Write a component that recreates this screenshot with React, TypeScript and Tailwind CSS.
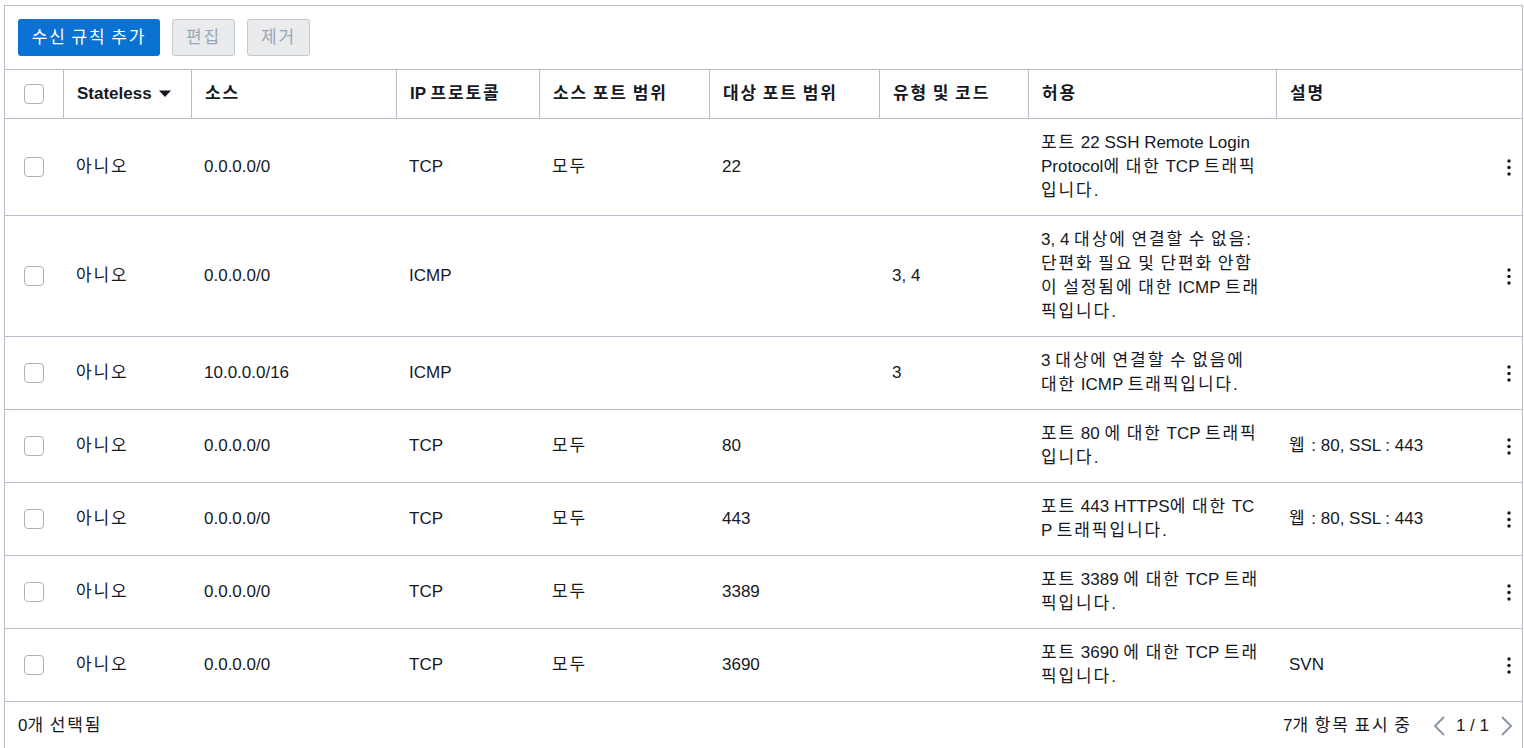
import React from "react";

const FONT = '"Liberation Sans", Arial, "Noto Sans CJK KR", sans-serif';

function K({ t }: { t: string }) {
  const parts = t.split(/([\u3131-\u318E\uAC00-\uD7A3]+)/);
  return (
    <span>
      {parts.map((p, i) =>
        /[\u3131-\u318E\uAC00-\uD7A3]/.test(p) ? (
          <span key={i} className="tracking-[1.9px]">
            {p}
          </span>
        ) : (
          <React.Fragment key={i}>{p}</React.Fragment>
        )
      )}
    </span>
  );
}

type Row = {
  source: string;
  proto: string;
  srcPort: string;
  dstPort: string;
  type: string;
  allow: string[];
  desc: string;
};

const rows: Row[] = [
  { source: "0.0.0.0/0", proto: "TCP", srcPort: "모두", dstPort: "22", type: "", allow: ["포트 22 SSH Remote Login", "Protocol에 대한 TCP 트래픽", "입니다."], desc: "" },
  { source: "0.0.0.0/0", proto: "ICMP", srcPort: "", dstPort: "", type: "3, 4", allow: ["3, 4 대상에 연결할 수 없음:", "단편화 필요 및 단편화 안함", "이 설정됨에 대한 ICMP 트래", "픽입니다."], desc: "" },
  { source: "10.0.0.0/16", proto: "ICMP", srcPort: "", dstPort: "", type: "3", allow: ["3 대상에 연결할 수 없음에", "대한 ICMP 트래픽입니다."], desc: "" },
  { source: "0.0.0.0/0", proto: "TCP", srcPort: "모두", dstPort: "80", type: "", allow: ["포트 80 에 대한 TCP 트래픽", "입니다."], desc: "웹 : 80, SSL : 443" },
  { source: "0.0.0.0/0", proto: "TCP", srcPort: "모두", dstPort: "443", type: "", allow: ["포트 443 HTTPS에 대한 TC", "P 트래픽입니다."], desc: "웹 : 80, SSL : 443" },
  { source: "0.0.0.0/0", proto: "TCP", srcPort: "모두", dstPort: "3389", type: "", allow: ["포트 3389 에 대한 TCP 트래", "픽입니다."], desc: "" },
  { source: "0.0.0.0/0", proto: "TCP", srcPort: "모두", dstPort: "3690", type: "", allow: ["포트 3690 에 대한 TCP 트래", "픽입니다."], desc: "SVN" },
];

const COLS = "grid grid-cols-[58px_128px_205px_143px_170px_170px_149px_248px_1fr]";

function Checkbox() {
  return <div className="w-[20px] h-[20px] rounded-[4px] border border-[#aab2bd] bg-white" />;
}

function Kebab() {
  return (
    <svg width="4" height="17" viewBox="0 0 4 17" className="block">
      <circle cx="2" cy="2" r="1.7" fill="#16191f" />
      <circle cx="2" cy="8.5" r="1.7" fill="#16191f" />
      <circle cx="2" cy="15" r="1.7" fill="#16191f" />
    </svg>
  );
}

function HeadCell({ children }: { children?: React.ReactNode }) {
  return (
    <div className="flex items-center pl-[13px] font-bold border-l border-[#b6bec9] whitespace-nowrap">
      {children}
    </div>
  );
}

export default function App() {
  return (
    <div className="w-[1524px] h-[748px] overflow-hidden bg-white pl-[4px] pt-[5px] pr-[1px]" style={{ fontFamily: FONT }}>
      <div className="border border-[#b6bec9] text-[#16191f] text-[17px] leading-[24px]">
        {/* toolbar */}
        <div className="flex gap-[12px] px-[13px] py-[13px]">
          <button className="h-[37px] w-[142px] rounded-[3px] bg-[#0972d3] text-white flex items-center justify-center whitespace-nowrap">
            <K t="수신 규칙 추가" />
          </button>
          <button className="h-[37px] w-[63px] rounded-[3px] bg-[#e9ebed] border border-[#c3c9d1] text-[#9ba7b6] flex items-center justify-center">
            <K t="편집" />
          </button>
          <button className="h-[37px] w-[63px] rounded-[3px] bg-[#e9ebed] border border-[#c3c9d1] text-[#9ba7b6] flex items-center justify-center">
            <K t="제거" />
          </button>
        </div>
        {/* header */}
        <div className={`${COLS} h-[50px] border-t border-b border-[#b6bec9]`}>
          <div className="flex items-center justify-center">
            <Checkbox />
          </div>
          <HeadCell>
            <span>Stateless</span>
            <svg width="12" height="8" viewBox="0 0 12 8" className="ml-[7px]">
              <path d="M0 0.5 L12 0.5 L6 7 Z" fill="#16191f" />
            </svg>
          </HeadCell>
          <HeadCell><K t="소스" /></HeadCell>
          <HeadCell><K t="IP 프로토콜" /></HeadCell>
          <HeadCell><K t="소스 포트 범위" /></HeadCell>
          <HeadCell><K t="대상 포트 범위" /></HeadCell>
          <HeadCell><K t="유형 및 코드" /></HeadCell>
          <HeadCell><K t="허용" /></HeadCell>
          <HeadCell><K t="설명" /></HeadCell>
        </div>
        {/* body */}
        {rows.map((r, i) => (
          <div key={i} className={`${COLS} border-b border-[#b6bec9] py-[12px]`}>
            <div className="flex items-center justify-center">
              <Checkbox />
            </div>
            <div className="flex items-center pl-[13px]"><K t="아니오" /></div>
            <div className="flex items-center pl-[13px]">{r.source}</div>
            <div className="flex items-center pl-[13px]">{r.proto}</div>
            <div className="flex items-center pl-[13px]"><K t={r.srcPort} /></div>
            <div className="flex items-center pl-[13px]">{r.dstPort}</div>
            <div className="flex items-center pl-[13px]">{r.type}</div>
            <div className="flex flex-col justify-center pl-[13px] whitespace-nowrap">
              {r.allow.map((l, j) => (
                <div key={j}><K t={l} /></div>
              ))}
            </div>
            <div className="flex items-center justify-between pl-[13px] pr-[11px] whitespace-nowrap">
              <K t={r.desc} />
              <Kebab />
            </div>
          </div>
        ))}
        {/* footer */}
        <div className="flex items-center justify-between pl-[13px] pr-[8px] py-[12px] whitespace-nowrap">
          <K t="0개 선택됨" />
          <div className="flex items-center">
            <K t="7개 항목 표시 중" />
            <svg width="14" height="22" viewBox="0 0 14 22" className="ml-[20px]">
              <path d="M12 2 L3 11 L12 20" fill="none" stroke="#8d99a8" strokeWidth="2" />
            </svg>
            <span className="ml-[10px]">1 / 1</span>
            <svg width="14" height="22" viewBox="0 0 14 22" className="ml-[11px]">
              <path d="M2 2 L11 11 L2 20" fill="none" stroke="#8d99a8" strokeWidth="2" />
            </svg>
          </div>
        </div>
      </div>
    </div>
  );
}
